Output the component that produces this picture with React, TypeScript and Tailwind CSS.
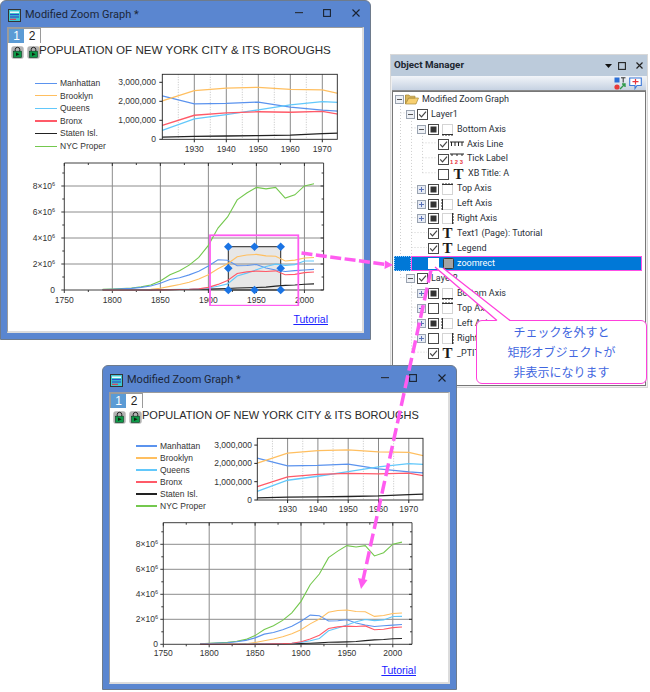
import React from "react";

const YEARS = Array.from({ length: 23 }, (_, i) => 1790 + i * 10);
const SERIES: { name: string; color: string; data: number[] }[] = [
  { name: "Staten Isl.", color: "#222222", data: [3.8, 4.5, 5, 6, 7, 11, 15, 25, 33, 39, 52, 67, 86, 116, 158, 174, 192, 222, 295, 352, 379, 444, 469] },
  { name: "NYC Proper", color: "#74c84e", data: [49, 79, 120, 152, 242, 391, 696, 1175, 1478, 1912, 2507, 3437, 4767, 5620, 6930, 7455, 7892, 7782, 7895, 7072, 7323, 8008, 8175] },
  { name: "Manhattan", color: "#5b93ee", data: [33, 60, 96, 124, 203, 312, 515, 813, 942, 1164, 1441, 1850, 2331, 2284, 1867, 1889, 1960, 1698, 1539, 1428, 1487, 1537, 1586] },
  { name: "Brooklyn", color: "#ffbf60", data: [5, 6, 8, 11, 21, 47, 139, 279, 420, 599, 839, 1167, 1634, 2018, 2560, 2698, 2738, 2627, 2602, 2231, 2301, 2465, 2505] },
  { name: "Queens", color: "#62c8fb", data: [6, 7, 7, 8, 9, 14, 19, 33, 45, 57, 87, 153, 284, 469, 1079, 1298, 1551, 1810, 1986, 1891, 1952, 2229, 2231] },
  { name: "Bronx", color: "#ff5a68", data: [2, 2, 3, 3, 3, 5, 8, 24, 37, 52, 89, 201, 431, 732, 1265, 1395, 1451, 1425, 1472, 1169, 1204, 1333, 1385] },
];
const LEGEND = ["Manhattan", "Brooklyn", "Queens", "Bronx", "Staten Isl.", "NYC Proper"];
const colorOf = (n: string) => SERIES.find((s) => s.name === n)!.color;
const FONT = "Liberation Sans, Arial, sans-serif";

type SmallCfg = { id: string; vb: [number, number, number, number]; x0: number; kx: number; y0: number; ky: number; right: number; top: number; labelX: number; labelY: number };
type MainCfg = { vb: [number, number, number, number]; x0: number; kx: number; y0: number; ky: number; right: number; top: number; labelX: number; labelY: number };

function SmallChart({ c, className }: { c: SmallCfg; className: string }) {
  const X = (y: number) => c.x0 + (y - 1920) * c.kx;
  const Y = (v: number) => c.y0 - (v * c.ky) / 1000;
  const left = c.x0;
  return (
    <svg viewBox={c.vb.join(" ")} className={className} style={{ fontFamily: FONT }}>
      <clipPath id={c.id}>
        <rect x={left} y={c.top} width={c.right - left} height={c.y0 - c.top} />
      </clipPath>
      {[1925, 1935, 1945, 1955, 1965].map((y) => (
        <line key={y} x1={X(y)} x2={X(y)} y1={c.top} y2={c.y0} stroke="#aaa" strokeWidth="0.7" strokeDasharray="1 1.5" />
      ))}
      {[1930, 1940, 1950, 1960, 1970].map((y) => (
        <g key={y}>
          <line x1={X(y)} x2={X(y)} y1={c.top} y2={c.y0} stroke="#8a8a8a" strokeWidth="1" />
          <line x1={X(y)} x2={X(y)} y1={c.y0} y2={c.y0 + 3} stroke="#222" strokeWidth="1" />
          <text x={X(y)} y={c.labelY} textAnchor="middle" fontSize="8.5" fill="#333">{y}</text>
        </g>
      ))}
      {["0", "1,000,000", "2,000,000", "3,000,000"].map((t, i) => (
        <g key={t}>
          <line x1={left - 3} x2={left} y1={Y(i * 1000)} y2={Y(i * 1000)} stroke="#222" strokeWidth="1" />
          <text x={c.labelX} y={Y(i * 1000) + 3} textAnchor="end" fontSize="8.5" fill="#333">{t}</text>
        </g>
      ))}
      <g clipPath={`url(#${c.id})`}>
        {SERIES.filter((s) => s.name !== "NYC Proper").map((s) => (
          <polyline key={s.name} fill="none" stroke={s.color} strokeWidth="1.3" points={s.data.map((v, i) => `${X(YEARS[i])},${Y(v)}`).join(" ")} />
        ))}
      </g>
      <rect x={left} y={c.top} width={c.right - left} height={c.y0 - c.top} fill="none" stroke="#222" strokeWidth="0.9" />
    </svg>
  );
}

function MainChart({ c, className, rect }: { c: MainCfg; className: string; rect?: boolean }) {
  const X = (y: number) => c.x0 + (y - 1750) * c.kx;
  const Y = (v: number) => c.y0 - (v * c.ky) / 1000;
  const left = c.x0;
  return (
    <svg viewBox={c.vb.join(" ")} className={className} style={{ fontFamily: FONT }}>
      {[1800, 1850, 1900, 1950, 2000].map((y) => (
        <line key={y} x1={X(y)} x2={X(y)} y1={c.top} y2={c.y0} stroke="#8c8c8c" strokeWidth="1" />
      ))}
      {[2000, 4000, 6000, 8000].map((v) => (
        <line key={v} x1={left} x2={c.right} y1={Y(v)} y2={Y(v)} stroke="#8c8c8c" strokeWidth="1" />
      ))}
      {[1750, 1775, 1800, 1825, 1850, 1875, 1900, 1925, 1950, 1975, 2000].map((y, i) => (
        <g key={y}>
          <line x1={X(y)} x2={X(y)} y1={c.y0} y2={c.y0 + (i % 2 ? 2 : 3)} stroke="#222" strokeWidth="0.9" />
          <line x1={X(y)} x2={X(y)} y1={c.top} y2={c.top + (i % 2 ? 2 : 3)} stroke="#222" strokeWidth="0.9" />
        </g>
      ))}
      {[0, 1000, 2000, 3000, 4000, 5000, 6000, 7000, 8000, 9000].map((v, i) => (
        <g key={v}>
          <line x1={left - (i % 2 ? 2 : 3)} x2={left} y1={Y(v)} y2={Y(v)} stroke="#222" strokeWidth="0.9" />
          <line x1={c.right - (i % 2 ? 2 : 3)} x2={c.right} y1={Y(v)} y2={Y(v)} stroke="#222" strokeWidth="0.9" />
        </g>
      ))}
      {rect && <rect x={228.3} y={246.7} width={52.4} height={43.3} fill="#e7e7e7" stroke="#222" strokeWidth="1" />}
      {rect && [2000].map((v) => <line key={v} x1={228} x2={281} y1={Y(v)} y2={Y(v)} stroke="#8c8c8c" strokeWidth="1" />)}
      {SERIES.map((s) => (
        <polyline key={s.name} fill="none" stroke={s.color} strokeWidth="1.1" points={s.data.map((v, i) => `${X(YEARS[i])},${Y(v)}`).join(" ")} />
      ))}
      <path d={`M${left} ${c.top}H${c.right}V${c.y0}H${left}Z`} fill="none" stroke="#2a2a2a" strokeWidth="0.9" />
      {[1750, 1800, 1850, 1900, 1950, 2000].map((y) => (
        <text key={y} x={X(y)} y={c.labelY} textAnchor="middle" fontSize="8.5" fill="#333">{y}</text>
      ))}
      {[2, 4, 6, 8].map((n) => (
        <text key={n} x={c.labelX} y={Y(n * 1000) + 3} textAnchor="end" fontSize="8.5" fill="#333">
          {n}×10<tspan fontSize="5.5" dy="-3">6</tspan>
        </text>
      ))}
      <text x={c.labelX} y={Y(0) + 3} textAnchor="end" fontSize="8.5" fill="#333">0</text>
      {rect && (
        <>
          <rect x={210} y={235.3} width={88.3} height={70.4} fill="none" stroke="#ff5cf0" strokeWidth="1.8" />
          {[228.3, 254.5, 280.7].flatMap((x) =>
            [246.7, 268.3, 290].filter((y) => !(x === 254.5 && y === 268.3)).map((y) => (
              <path key={`${x}-${y}`} d={`M${x} ${y - 4.3}L${x + 4.3} ${y}L${x} ${y + 4.3}L${x - 4.3} ${y}Z`} fill="#1b74e4" />
            ))
          )}
        </>
      )}
    </svg>
  );
}

function DocIcon() {
  return (
    <svg viewBox="0 0 13 13" className="w-[13px] h-[13px] shrink-0">
      <rect x="0.5" y="0.5" width="12" height="12" fill="#3ec6cf" stroke="#333" />
      <rect x="2" y="2.5" width="9" height="1.4" fill="#ffffff" />
      <rect x="2" y="5" width="9" height="1.2" fill="#2a50c8" />
      <rect x="2" y="7.4" width="9" height="1.2" fill="#2a50c8" />
      <path d="M2 10.3H8" stroke="#e03a5a" strokeWidth="1.2" />
    </svg>
  );
}

function WinButtons() {
  return (
    <div className="flex items-center ml-auto pr-[10px] mb-[5px] shrink-0">
      <svg viewBox="0 0 8 2" className="w-[8px] h-[2px]"><rect width="8" height="1.2" fill="#2a3240" /></svg>
      <svg viewBox="0 0 8 8" className="w-[8px] h-[8px] ml-[20px]"><rect x="0.6" y="0.6" width="6.8" height="6.8" fill="none" stroke="#1a2230" strokeWidth="1.1" /></svg>
      <svg viewBox="0 0 8 8" className="w-[8px] h-[8px] ml-[21px]"><path d="M0.5 0.5L7.5 7.5M7.5 0.5L0.5 7.5" stroke="#1a2230" strokeWidth="1.1" /></svg>
    </div>
  );
}

function Lock() {
  return (
    <svg viewBox="0 0 13 13" className="w-[13px] h-[13px] shrink-0">
      <rect x="0.3" y="0.3" width="12.4" height="12.4" rx="2.5" fill="#b3b3b3" />
      <path d="M4.2 5.5V3.6a2.3 2.3 0 0 1 4.6 0V5.5" fill="none" stroke="#222" strokeWidth="1" />
      <rect x="2.5" y="5.2" width="8" height="6.2" fill="#0d9a48" stroke="#0b3b20" strokeWidth="0.6" />
      <path d="M5 6.5L8.6 8.3L5 10Z" fill="#10210f" />
    </svg>
  );
}

function GraphWindow({ w }: { w: {
  outer: string; contentClass: string; titleFont: string; titleMl: string;
  smallRow: string; legend: string; legendMl: string; rowH: string; small: SmallCfg; smallCls: string;
  main: MainCfg; mainCls: string; tutorial: string; rect?: boolean; lineW: string;
} }) {
  return (
    <div className={`absolute flex flex-col rounded-t-[6px] bg-[#5a86d0] border border-[#6e7b8c] ${w.outer}`}>
      <div className="flex items-center h-[26px] shrink-0 pl-[7px] pt-[2px]">
        <DocIcon />
        <span className="ml-[4px] text-[11px] text-[#1c2638] whitespace-nowrap" style={{ fontFamily: "Roboto, sans-serif" }}>Modified Zoom Graph *</span>
        <WinButtons />
      </div>
      <div className={`bg-white border-t border-l border-[#9c9c9c] border-r-2 border-b-2 border-r-[#dcdcdc] border-b-[#dcdcdc] flex flex-col ${w.contentClass}`} style={{ fontFamily: FONT }}>
        <div className="flex">
          <div className="w-[16px] h-[15px] bg-[#5b9bd5] text-white text-[12px] leading-[15px] text-center border-t border-l border-[#9a9a9a]">1</div>
          <div className="w-[17px] h-[15px] bg-white text-[#222] text-[12px] leading-[15px] text-center border-t border-r border-[#9a9a9a]">2</div>
        </div>
        <div className="flex items-start h-[16px]">
          <div className="flex gap-[3px] ml-[3px] mt-[3px]"><Lock /><Lock /></div>
          <span className={`text-[#2a2a2a] leading-[14px] whitespace-nowrap ${w.titleFont} ${w.titleMl}`}>POPULATION OF NEW YORK CITY &amp; ITS BOROUGHS</span>
        </div>
        <div className={`flex ${w.smallRow}`}>
          <div className={`flex flex-col pt-[7px] ${w.legend}`}>
            {LEGEND.map((n) => (
              <div key={n} className={`flex items-center text-[8.5px] text-[#333] ${w.rowH}`}>
                <span className={`block h-[1.2px] ${w.lineW}`} style={{ background: colorOf(n) }} />
                <span className="ml-[3px] whitespace-nowrap">{n}</span>
              </div>
            ))}
          </div>
          <SmallChart c={w.small} className={w.smallCls} />
        </div>
        <div className={w.legendMl}>
          <MainChart c={w.main} className={w.mainCls} rect={w.rect} />
        </div>
        <div className={`text-right text-[10.5px] leading-[13px] text-[#1a22ff] underline ${w.tutorial}`}>Tutorial</div>
      </div>
    </div>
  );
}

function Exp({ open }: { open: boolean }) {
  return (
    <svg viewBox="0 0 9 9" className="w-[9px] h-[9px] shrink-0">
      <rect x="0.5" y="0.5" width="8" height="8" fill={open ? "#eef1f6" : "#e6ebf5"} stroke="#9aa3b0" />
      <path d="M2 4.5H7" stroke={open ? "#555" : "#5a72b8"} />
      {!open && <path d="M4.5 2V7" stroke="#5a72b8" />}
    </svg>
  );
}

function Check({ s }: { s: "on" | "mix" | "off" | "sel" }) {
  return (
    <svg viewBox="0 0 11 11" className="w-[11px] h-[11px] shrink-0">
      <rect x="0.5" y="0.5" width="10" height="10" fill="#fff" stroke={s === "sel" ? "#fff" : "#4a4a4a"} />
      {s === "on" && <path d="M2.2 5.4L4.5 7.8L9 2.6" fill="none" stroke="#444" strokeWidth="1.2" />}
      {s === "mix" && <rect x="2.5" y="2.5" width="6" height="6" fill="#333" />}
    </svg>
  );
}

function AxisIcon({ kind }: { kind: "bottom" | "top" | "left" | "right" }) {
  const t = Array.from({ length: 4 }, (_, i) => i);
  return (
    <svg viewBox="0 0 13 13" className="w-[13px] h-[13px] shrink-0 ml-[3px]">
      <rect x="1.5" y="1.5" width="10" height="10" fill="#fff" stroke="#d4d4d4" />
      {kind === "bottom" && <><path d="M1 11.5H12" stroke="#333" />{t.map((i) => <path key={i} d={`M${2 + i * 3} 11.5V13.5`} stroke="#333" />)}</>}
      {kind === "top" && <><path d="M1 1.5H12" stroke="#333" />{t.map((i) => <path key={i} d={`M${2 + i * 3} 1.5V-0.5`} stroke="#333" />)}</>}
      {kind === "left" && <><path d="M1.5 1V12" stroke="#333" />{t.map((i) => <path key={i} d={`M1.5 ${2 + i * 3}H-0.5`} stroke="#333" />)}</>}
      {kind === "right" && <><path d="M11.5 1V12" stroke="#333" />{t.map((i) => <path key={i} d={`M11.5 ${2 + i * 3}H13.5`} stroke="#333" />)}</>}
    </svg>
  );
}

type Row = { lv: 0 | 1 | 2 | 3; exp?: "o" | "c"; ck?: "on" | "mix" | "off" | "sel"; ic?: "folder" | "bottom" | "top" | "left" | "right" | "T" | "line" | "tick" | "rect"; t: string; sel?: boolean };
const ROWS: Row[] = [
  { lv: 0, exp: "o", ic: "folder", t: "Modified Zoom Graph" },
  { lv: 1, exp: "o", ck: "on", t: "Layer1" },
  { lv: 2, exp: "o", ck: "mix", ic: "bottom", t: "Bottom Axis" },
  { lv: 3, ck: "on", ic: "line", t: "Axis Line" },
  { lv: 3, ck: "on", ic: "tick", t: "Tick Label" },
  { lv: 3, ck: "off", ic: "T", t: "XB Title: A" },
  { lv: 2, exp: "c", ck: "mix", ic: "top", t: "Top Axis" },
  { lv: 2, exp: "c", ck: "mix", ic: "left", t: "Left Axis" },
  { lv: 2, exp: "c", ck: "mix", ic: "right", t: "Right Axis" },
  { lv: 2, ck: "on", ic: "T", t: "Text1 (Page): Tutorial" },
  { lv: 2, ck: "on", ic: "T", t: "Legend" },
  { lv: 2, ck: "sel", ic: "rect", t: "zoomrect", sel: true },
  { lv: 1, exp: "o", ck: "on", t: "Layer2" },
  { lv: 2, exp: "c", ck: "mix", ic: "bottom", t: "Bottom Axis" },
  { lv: 2, exp: "c", ck: "off", ic: "top", t: "Top Axis" },
  { lv: 2, exp: "c", ck: "mix", ic: "left", t: "Left Axis" },
  { lv: 2, exp: "c", ck: "off", ic: "right", t: "Right Axis" },
  { lv: 2, ck: "on", ic: "T", t: "_PTITLE" },
];
const PAD: Record<number, string> = { 0: "pl-[2px]", 1: "pl-[13px]", 2: "pl-[24px]", 3: "pl-[45px]" };

function RowIcon({ ic }: { ic: NonNullable<Row["ic"]> }) {
  if (ic === "folder")
    return (
      <svg viewBox="0 0 14 12" className="w-[14px] h-[12px] ml-[-1px] shrink-0">
        <path d="M0.5 2V11H11L13.5 5H3.5L1.5 9" fill="#f8d070" stroke="#a88a3a" strokeWidth="0.7" />
        <path d="M0.5 11V2H4L5 3.2H10V5H3.5L0.5 11Z" fill="#d9b65c" stroke="#a88a3a" strokeWidth="0.7" />
      </svg>
    );
  if (ic === "T")
    return <span className="ml-[3px] w-[13px] text-center text-[15px] leading-[13px] font-bold text-[#1a1a1a] shrink-0" style={{ fontFamily: "Liberation Serif, serif" }}>T</span>;
  if (ic === "line")
    return (
      <svg viewBox="0 0 14 6" className="w-[14px] h-[6px] ml-[1px] shrink-0">
        <path d="M0 1H14M1.5 1V5M5 1V5M8.5 1V5M12 1V5" stroke="#222" fill="none" />
      </svg>
    );
  if (ic === "tick")
    return (
      <svg viewBox="0 0 14 12" className="w-[14px] h-[12px] ml-[1px] shrink-0">
        <path d="M0 1H14M2 1V3M7 1V3M12 1V3" stroke="#222" fill="none" />
        <text x="0" y="10.5" fontSize="5.8" fontWeight="bold" fill="#e8323c" style={{ fontFamily: FONT }}>1 2 3</text>
      </svg>
    );
  if (ic === "rect")
    return (
      <svg viewBox="0 0 11 11" className="w-[11px] h-[11px] ml-[4px] shrink-0">
        <rect x="0.5" y="0.5" width="10" height="10" rx="1" fill="#a3a3a3" stroke="#3a3a3a" />
      </svg>
    );
  return <AxisIcon kind={ic} />;
}

function TreeLines() {
  const rowY = (i: number) => 6 + i * 14.95;
  return (
    <svg viewBox="0 0 252 296" className="absolute left-0 top-0 w-[252px] h-[296px] pointer-events-none">
      <g stroke="#cfcfcf" strokeWidth="1" strokeDasharray="1 2" fill="none">
        <path d={`M7.5 ${rowY(0) + 5}V${rowY(12)}M7.5 ${rowY(1)}H13M7.5 ${rowY(12)}H13`} />
        <path d={`M18.5 ${rowY(1) + 5}V${rowY(11)}`} />
        <path d={`M18.5 ${rowY(12) + 5}V${rowY(17)}`} />
        {[2, 6, 7, 8, 9, 10, 11, 13, 14, 15, 16, 17].map((i) => <path key={i} d={`M18.5 ${rowY(i)}H${[9, 10, 11, 17].includes(i) ? 34 : 24}`} />)}
        <path d={`M29.5 ${rowY(2) + 5}V${rowY(5)}`} />
        {[3, 4, 5].map((i) => <path key={i} d={`M29.5 ${rowY(i)}H44`} />)}
      </g>
    </svg>
  );
}

function ObjectManager() {
  return (
    <div className="absolute left-[390px] top-[54px] w-[258px] h-[334px] bg-[#f0f0f0] border border-[#d8d8d8] flex flex-col">
      <div className="h-[21px] bg-[#bccbdb] flex items-center pl-[3px] pr-[4px] shrink-0">
        <span className="text-[9.8px] font-bold text-[#1d2630]" style={{ fontFamily: "Roboto, sans-serif" }}>Object Manager</span>
        <svg viewBox="0 0 7 4" className="w-[7px] h-[4px] ml-auto"><path d="M0 0H7L3.5 4Z" fill="#111" /></svg>
        <svg viewBox="0 0 8 8" className="w-[8px] h-[8px] ml-[6px]"><rect x="0.6" y="0.6" width="6.8" height="6.8" fill="none" stroke="#222" strokeWidth="1.1" /></svg>
        <svg viewBox="0 0 7 7" className="w-[7px] h-[7px] ml-[10px]"><path d="M0.5 0.5L6.5 6.5M6.5 0.5L0.5 6.5" stroke="#222" strokeWidth="1.2" /></svg>
      </div>
      <div className="h-[15px] mx-px shrink-0 bg-gradient-to-b from-[#f2f5f9] to-[#c6d2e2] flex items-center justify-end gap-[2px] pr-[4px] border-b border-[#8a8a8a]">
        <svg viewBox="0 0 13 13" className="w-[13px] h-[13px]">
          <rect x="0.5" y="0.5" width="5" height="5" fill="#2b6fd6" />
          <circle cx="3" cy="10" r="2.6" fill="#e83a3a" />
          <path d="M7 0.8H11.5M9.2 0.8V5.5" stroke="#333" />
          <path d="M6 12L11 7M8 7H11V10" stroke="#2f9a4a" strokeWidth="1.4" fill="none" />
        </svg>
        <svg viewBox="0 0 13 13" className="w-[13px] h-[13px]">
          <path d="M0.7 1H12.3V8.5H8L6 11.5V8.5H0.7Z" fill="#fff" stroke="#3c78d8" strokeWidth="1.1" />
          <path d="M3.5 4.7H9.5M6.5 2V7.5" stroke="#e8323c" strokeWidth="1.2" />
        </svg>
      </div>
      <div className="relative flex-1 mx-px mb-px bg-white border border-[#777] overflow-hidden" style={{ fontFamily: "Roboto, sans-serif" }}>
        <TreeLines />
        {ROWS.map((r, i) => (
          <div key={i} className={`relative flex items-center h-[14.95px] ${PAD[r.lv]}`}>
            {r.sel && <span className="absolute left-[1px] top-0 h-[15px] w-[17px] bg-[#0078d7] border border-dotted border-[#9fd0ff]" />}
            {r.sel && <span className="absolute left-[18px] top-0 h-[15px] w-[231px] bg-[#0078d7] border-[1.5px] border-[#ff4fe6]" />}
            {r.exp ? <span className="relative w-[11px] shrink-0"><Exp open={r.exp === "o"} /></span> : r.lv === 2 ? <span className="w-[11px] shrink-0" /> : null}
            {r.ck && <span className="relative"><Check s={r.ck} /></span>}
            {r.ic && <span className={`relative flex items-center ${r.lv === 2 && r.ic !== "rect" ? "ml-[-1px]" : ""}`}><RowIcon ic={r.ic} /></span>}
            <span className={`relative ml-[3px] text-[9px] whitespace-nowrap ${r.sel ? "text-white" : "text-[#2a2f38]"}`}>{r.t}</span>
          </div>
        ))}
      </div>
    </div>
  );
}

export default function App() {
  return (
    <div className="relative w-[650px] h-[692px] bg-white overflow-hidden">
      <ObjectManager />
      <GraphWindow
        w={{
          outer: "left-0 top-0 w-[371px] h-[340px]",
          contentClass: "mx-[6px] h-[306px]",
          titleFont: "text-[11.6px]",
          titleMl: "ml-[-1px]",
          smallRow: "mt-[11px]",
          legend: "ml-[27px] w-[75px]",
          legendMl: "ml-[22px] mt-[3px]",
          rowH: "h-[12.6px]",
          lineW: "w-[22px]",
          small: { id: "c1", vb: [110, 70, 240, 85], x0: 162.3, kx: 3.2, y0: 139.3, ky: 19, right: 337.3, top: 74.3, labelX: 156, labelY: 152 },
          smallCls: "w-[240px] h-[85px] shrink-0",
          main: { vb: [30, 158, 310, 148], x0: 64.3, kx: 0.9605, y0: 290, ky: 13, right: 323.6, top: 163, labelX: 55, labelY: 303 },
          mainCls: "w-[310px] h-[148px]",
          tutorial: "mt-[7px] mr-[34px]",
          rect: true,
        }}
      />
      <GraphWindow
        w={{
          outer: "left-[102px] top-[365px] w-[355px] h-[325px]",
          contentClass: "mx-[6px] h-[292px]",
          titleFont: "text-[11px]",
          titleMl: "ml-[0px]",
          smallRow: "mt-[9px]",
          legend: "ml-[26px] w-[74px]",
          legendMl: "ml-[15px] mt-[-2px]",
          rowH: "h-[12px]",
          lineW: "w-[21px]",
          small: { id: "c2", vb: [210, 432, 235, 85], x0: 257.3, kx: 3.03, y0: 499, ky: 18.3, right: 423, top: 437.3, labelX: 252, labelY: 511 },
          smallCls: "w-[235px] h-[85px] shrink-0",
          main: { vb: [125, 515, 300, 145], x0: 163.3, kx: 0.918, y0: 643.3, ky: 12.5, right: 412, top: 521.7, labelX: 158, labelY: 655 },
          mainCls: "w-[300px] h-[145px]",
          tutorial: "mt-[3px] mr-[32px]",
        }}
      />
      <div
        className="absolute left-[476px] top-[320px] w-[171px] h-[64px] bg-white border border-[#ff40dc] rounded-[6px] flex flex-col items-center justify-center text-[12px] leading-[20px] text-[#3f66e0]"
        style={{ fontFamily: "Noto Sans CJK JP, sans-serif" }}
      >
        <span>チェックを外すと</span>
        <span>矩形オブジェクトが</span>
        <span>非表示になります</span>
      </div>
      <svg viewBox="0 0 650 692" className="absolute left-0 top-0 w-[650px] h-[692px] pointer-events-none">
        <polygon points="435,267 443,268 510,321 497,321" fill="#fff" />
        <path d="M435 267L497 320.5M443 268L510 320.5" stroke="#ff40dc" strokeWidth="1.3" fill="none" />
        <path d="M301.5 253L386 264.5" stroke="#ff5cf0" strokeWidth="3.5" strokeDasharray="11 3.5" fill="none" />
        <polygon points="393,265 385,260.5 384.5,269" fill="#ff5cf0" />
        <path d="M431 270L363 580" stroke="#ff5cf0" strokeWidth="3.5" strokeDasharray="13 5" fill="none" />
        <polygon points="358,578 367.5,580 361,589" fill="#ff5cf0" />
      </svg>
    </div>
  );
}
